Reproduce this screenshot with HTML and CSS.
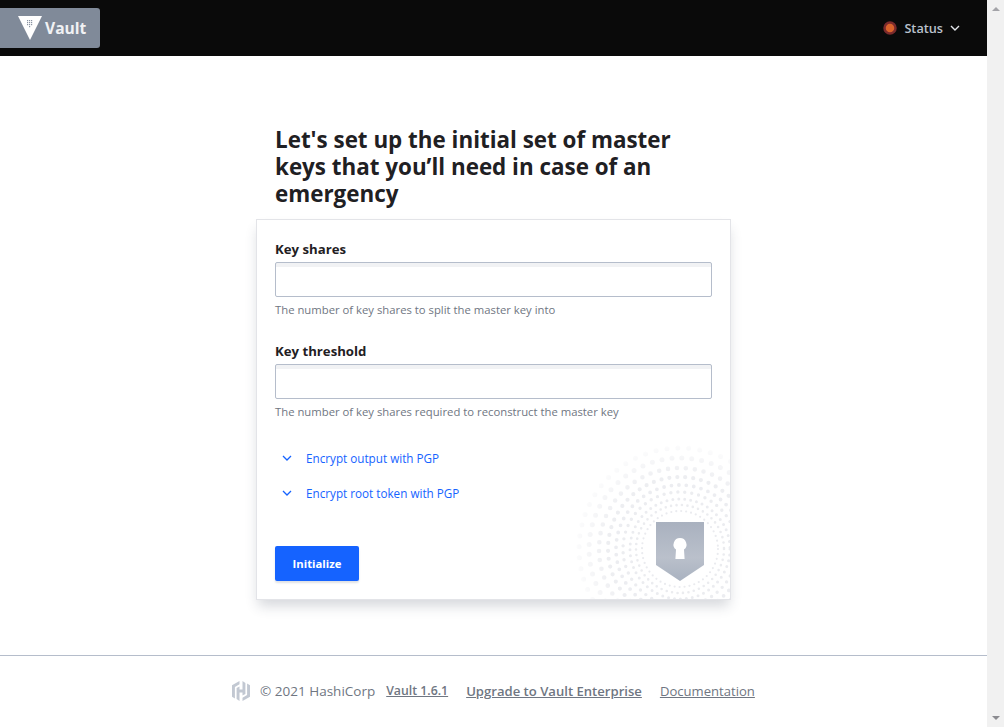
FILE: index.html
```html
<!DOCTYPE html>
<html lang="en">
  <head>
    <meta charset="UTF-8" />
    <meta name="viewport" content="width=device-width, initial-scale=1.0" />
    <title>Vault</title>
    <link rel="stylesheet" href="styles.css">
  </head>
  <body>
    <div class="page">
      <header class="topbar">
        <a class="brand" href="#">
          <svg class="brand-mark" width="24" height="24" viewBox="0 0 24 24">
            <polygon points="0,0 24,0 12,24" fill="#fff" />
            <g fill="#8a94a3">
              <rect x="9" y="4" width="1.2" height="1.2" /><rect x="11" y="4" width="1.2" height="1.2" /><rect x="13" y="4" width="1.2" height="1.2" />
              <rect x="9" y="6" width="1.2" height="1.2" /><rect x="11" y="6" width="1.2" height="1.2" /><rect x="13" y="6" width="1.2" height="1.2" />
              <rect x="9" y="8" width="1.2" height="1.2" /><rect x="11" y="8" width="1.2" height="1.2" /><rect x="13" y="8" width="1.2" height="1.2" />
              <rect x="11" y="10" width="1.2" height="1.2" />
            </g>
          </svg>
          <span>Vault</span>
        </a>
        <div class="status">
          <svg width="14" height="14" viewBox="0 0 14 14">
            <circle cx="7" cy="7" r="5.500" fill="#d9622b" stroke="#7b2a2c" stroke-width="2.500" />
          </svg>
          <span class="status-label">Status</span>
          <svg class="status-chevron" width="10" height="6" viewBox="0 0 10 6">
            <path d="M1 1l4 4 4-4" fill="none" stroke="#e4e7ec" stroke-width="1.4" />
          </svg>
        </div>
      </header>

      <main class="main">
        <h1 class="title">Let's set up the initial set of master keys that you’ll need in case of an emergency</h1>
        <form class="card">
          <svg class="card-art" width="160" height="160" viewBox="0 0 160 160">
            <defs>
              <radialGradient id="fade" gradientUnits="userSpaceOnUse" cx="110" cy="110" r="112">
                <stop offset="0.2" stop-color="#fff" />
                <stop offset="0.65" stop-color="#d0d0d0" />
                <stop offset="1" stop-color="#000" />
              </radialGradient>
              <mask id="fade-mask"><rect width="160" height="160" fill="url(#fade)" /></mask>
              <linearGradient id="shield" x1="0" y1="0" x2="0" y2="1">
                <stop offset="0" stop-color="#a9b1bf" />
                <stop offset="0.6" stop-color="#bac0cb" />
                <stop offset="1" stop-color="#a9b2c0" />
              </linearGradient>
            </defs>
            <g class="dots" mask="url(#fade-mask)" fill="none" stroke="#e9eaee" stroke-linecap="round">
              <circle cx="110" cy="110" r="38" stroke-width="2.2" stroke-dasharray="0 5" />
              <circle cx="110" cy="110" r="44" stroke-width="2.600" stroke-dasharray="0 5.5" />
              <circle cx="110" cy="110" r="50" stroke-width="3" stroke-dasharray="0 6" />
              <circle cx="110" cy="110" r="57" stroke-width="3.4" stroke-dasharray="0 7" />
              <circle cx="110" cy="110" r="64" stroke-width="3.800" stroke-dasharray="0 7.5" />
              <circle cx="110" cy="110" r="72" stroke-width="4.2" stroke-dasharray="0 8" />
              <circle cx="110" cy="110" r="81" stroke-width="4.600" stroke-dasharray="0 9" />
              <circle cx="110" cy="110" r="91" stroke-width="5" stroke-dasharray="0 10" />
              <circle cx="110" cy="110" r="101" stroke-width="5" stroke-dasharray="0 11" />
            </g>
            <path d="M86 83h48v43l-24 16-24-16z" fill="url(#shield)" />
            <path d="M110 99a6.500 6.500 0 0 1 4 11.600l.6 9.400h-9.200l.6-9.400a6.500 6.500 0 0 1 4-11.600z" fill="#fff" />
          </svg>

          <div class="field">
            <label class="field-label">Key shares</label>
            <input class="field-input" type="text" />
            <p class="field-help">The number of key shares to split the master key into</p>
          </div>
          <div class="field">
            <label class="field-label">Key threshold</label>
            <input class="field-input" type="text" />
            <p class="field-help">The number of key shares required to reconstruct the master key</p>
          </div>

          <div class="toggles">
            <a class="toggle" href="#">
              <svg width="10" height="6" viewBox="0 0 10 6"><path d="M1 1l4 4 4-4" fill="none" stroke="#1563ff" stroke-width="1.300" /></svg>
              <span>Encrypt output with PGP</span>
            </a>
            <a class="toggle" href="#">
              <svg width="10" height="6" viewBox="0 0 10 6"><path d="M1 1l4 4 4-4" fill="none" stroke="#1563ff" stroke-width="1.300" /></svg>
              <span>Encrypt root token with PGP</span>
            </a>
          </div>

          <button class="button" type="button">Initialize</button>
        </form>
      </main>

      <footer class="footer">
        <svg class="footer-logo" width="18" height="20" viewBox="0 0 18 20">
          <path d="M7.500 0L0 4.300v11.400L2.900 17.400V6L7.500 3.300z" fill="#c2c8d2" />
          <path d="M10.500 0v8.500H7.500V5.400L4.600 7v11l2.900 2v-8.500h3V14.600L13.400 13V2z" fill="#c2c8d2" />
          <path d="M15.100 2.600V14L10.500 16.700V20L18 15.700V4.300z" fill="#c2c8d2" />
        </svg>
        <span class="copyright">© 2021 HashiCorp</span>
        <a class="footer-link footer-link-strong footer-link-version" href="#">Vault 1.6.1</a>
        <a class="footer-link footer-link-strong" href="#">Upgrade to Vault Enterprise</a>
        <a class="footer-link" href="#">Documentation</a>
      </footer>
    </div>

    <div class="scrollbar">
      <span class="scroll-up"></span>
      <span class="scroll-down"></span>
    </div>
  </body>
</html>
```

FILE: styles.css
```css
* {
  box-sizing: border-box;
}
html,
body {
  margin: 0;
  height: 100%;
  overflow: hidden;
}
body {
  display: flex;
  font-family: "Open Sans", "Noto Sans", sans-serif;
  color: #1f2023;
  background: #fff;
}
.page {
  flex: 1;
  min-width: 0;
}
.scrollbar {
  display: flex;
  flex-direction: column;
  justify-content: space-between;
  align-items: center;
  width: 17px;
  padding: 7px 0;
  background: #f1f1f1;
}
.scroll-up {
  border-left: 4px solid transparent;
  border-right: 4px solid transparent;
  border-bottom: 4px solid #a3a3a8;
}
.scroll-down {
  border-left: 4px solid transparent;
  border-right: 4px solid transparent;
  border-top: 4px solid #8b8b90;
}

/* top bar */
.topbar {
  display: flex;
  align-items: center;
  justify-content: space-between;
  height: 56px;
  padding-right: 27px;
  background: #0a0a0a;
}
.brand {
  display: flex;
  align-items: center;
  gap: 3px;
  width: 100px;
  height: 40px;
  padding-left: 18px;
  color: #f1f2f4;
  font-size: 15.600px;
  font-weight: 700;
  text-decoration: none;
  background: #808a99;
  border-radius: 0 3px 3px 0;
}
.status {
  display: flex;
  align-items: center;
  font-size: 12.700px;
  font-weight: 600;
  color: #bac1cd;
}
.status-label {
  margin-left: 7px;
}
.status-chevron {
  margin-left: 7px;
}

/* form */
.main {
  width: 475px;
  margin: 0 auto;
  padding-top: 70px;
}
.title {
  margin: 0 0 12px;
  padding: 0 19px;
  font-size: 22.400px;
  font-weight: 700;
  line-height: 27px;
}
.card {
  position: relative;
  height: 381px;
  padding: 19px 18px 0;
  background: #fff;
  border: 1px solid #e3e4e8;
  box-shadow: 0 8px 12px -2px rgba(50, 60, 80, 0.2);
}
.card-art {
  position: absolute;
  right: 0;
  bottom: 0;
}
.field {
  position: relative;
  height: 102px;
}
.field-label {
  display: block;
  font-size: 13.200px;
  font-weight: 700;
  line-height: 20px;
  margin-bottom: 3px;
}
.field-input {
  display: block;
  width: 100%;
  height: 35px;
  border: 1px solid #b5bdcb;
  border-radius: 2px;
  background: linear-gradient(#f1f2f4 4px, #fff 4px);
}
.field-help {
  margin: 5px 0 0;
  font-size: 11.300px;
  line-height: 16px;
  color: #6f7682;
}
.toggles {
  position: relative;
  display: flex;
  flex-direction: column;
  gap: 15px;
  margin-top: 5px;
}
.toggle {
  display: flex;
  align-items: center;
  gap: 14px;
  height: 20px;
  padding-left: 7px;
  font-size: 11.700px;
  font-weight: 500;
  color: #1563ff;
  text-decoration: none;
}
.button {
  position: absolute;
  left: 18px;
  bottom: 18px;
  width: 84px;
  height: 35px;
  border: 0;
  border-radius: 2px;
  color: #fff;
  font-family: inherit;
  font-size: 11.300px;
  font-weight: 700;
  background: #1563ff;
  box-shadow: 0 2px 2px rgba(50, 60, 80, 0.15);
}

/* footer */
.footer {
  display: flex;
  justify-content: center;
  align-items: center;
  height: 72px;
  margin-top: 55px;
  padding-bottom: 2px;
  border-top: 1px solid #b5bdcb;
  font-size: 13.100px;
  color: #6f7682;
}
.copyright {
  margin-left: 10px;
  font-size: 13.500px;
}
.footer-link {
  margin-left: 18px;
  color: #6f7682;
}
.footer-link-strong {
  font-weight: 600;
}
.footer-link-version {
  margin-left: 11px;
  font-size: 12.300px;
}
```
